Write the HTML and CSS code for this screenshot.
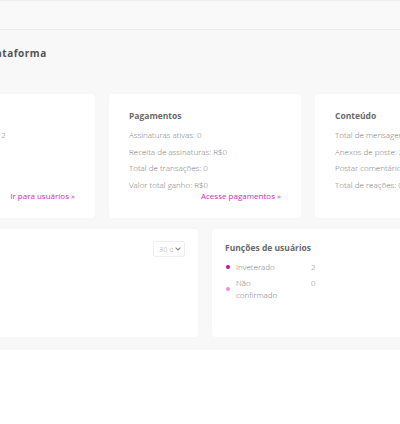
FILE: index.html
```html
<!DOCTYPE html>
<html lang="pt">
<head>
<meta charset="utf-8">
<link rel="stylesheet" href="styles.css">
</head>
<body>
<div class="topbar"></div>
<main class="main">
  <div class="container">
    <h1 class="page-title">Estatísticas da plataforma</h1>
    <div class="stats-row">
      <section class="card stat-card">
        <h2 class="card-title">Usuários</h2>
        <p class="line">Usuários registrados: 2</p>
        <div class="spacer"></div>
        <a class="card-link">Ir para usuários »</a>
      </section>
      <section class="card stat-card">
        <h2 class="card-title">Pagamentos</h2>
        <p class="line">Assinaturas ativas: 0</p>
        <p class="line">Receita de assinaturas: R$0</p>
        <p class="line">Total de transações: 0</p>
        <p class="line">Valor total ganho: R$0</p>
        <div class="spacer"></div>
        <a class="card-link">Acesse pagamentos »</a>
      </section>
      <section class="card stat-card">
        <h2 class="card-title">Conteúdo</h2>
        <p class="line">Total de mensagens: 0</p>
        <p class="line">Anexos de poste: 2</p>
        <p class="line">Postar comentários: 0</p>
        <p class="line">Total de reações: 0</p>
        <div class="spacer"></div>
        <a class="card-link">Ver conteúdo »</a>
      </section>
    </div>
    <div class="charts-row">
      <section class="card chart-card">
        <div class="chart-head">
          <h2 class="card-title">Novos usuários</h2>
          <div class="select"><span class="select-text">30 dias</span>
            <svg class="chev" width="6" height="4" viewBox="0 0 6 4"><path d="M0.6 0.6 L3 3 L5.4 0.6" fill="none" stroke="#8a8a8a" stroke-width="1.1"/></svg>
          </div>
        </div>
      </section>
      <section class="card roles-card">
        <h2 class="card-title roles-title">Funções de usuários</h2>
        <div class="legend">
          <span class="dot dot-a"></span><span class="lg-label">Inveterado</span><span class="lg-val">2</span>
          <span class="dot dot-b"></span><span class="lg-label">Não confirmado</span><span class="lg-val">0</span>
        </div>
      </section>
    </div>
  </div>
</main>
</body>
</html>
```
FILE: styles.css
```css
html, body {
  margin: 0;
  padding: 0;
  background: #ffffff;
  font-family: "Open Sans", "Liberation Sans", sans-serif;
  overflow: hidden;
}
.topbar {
  height: 28px;
  background: #f9f9f9;
  border-top: 1px solid #eeeeee;
  border-bottom: 1px solid #ececec;
}
.main {
  background: #f8f8f8;
  height: 320px;
  overflow: hidden;
}
.container {
  width: 604px;
  margin-left: -97px;
}
.page-title {
  margin: 0;
  padding-top: 17px;
  height: 64px;
  box-sizing: border-box;
  font-size: 10px;
  line-height: 12px;
  font-weight: 700;
  color: #555;
  letter-spacing: 0.5px;
}
.stats-row {
  display: grid;
  grid-template-columns: repeat(3, 192px);
  gap: 14px;
}
.card {
  background: #ffffff;
  border-radius: 3px;
  box-shadow: 0 0 1px rgba(0,0,0,0.06);
  box-sizing: border-box;
}
.stat-card {
  height: 124px;
  padding: 16px 20px 16px 20px;
  display: flex;
  flex-direction: column;
}
.card-title {
  margin: 0 0 5px 0;
  font-size: 8.5px;
  line-height: 12px;
  font-weight: 700;
  color: #6a6a6a;
}
.line {
  margin: 0;
  font-size: 8px;
  line-height: 16.6px;
  font-weight: 300;
  color: #777;
  white-space: nowrap;
}
.spacer { flex: 1; }
.card-link {
  align-self: flex-end;
  font-size: 8px;
  line-height: 12px;
  color: #d02cb8;
  margin-top: -4px;
}
.charts-row {
  display: grid;
  grid-template-columns: 295px 295px;
  gap: 14px;
  margin-top: 11px;
}
.chart-card, .roles-card {
  height: 108px;
  padding: 12px 13px;
}
.chart-head {
  display: flex;
  justify-content: space-between;
  align-items: flex-start;
}
.select {
  width: 32px;
  height: 16px;
  box-sizing: border-box;
  border: 1px solid #efefef;
  border-radius: 2px;
  display: flex;
  align-items: center;
  padding: 0 3px 0 5px;
  gap: 1px;
}
.select-text {
  width: 18px;
  overflow: hidden;
  white-space: nowrap;
  font-size: 7.5px;
  color: #aaa;
  font-weight: 300;
}
.chev { flex: none; margin-left: 1px; }
.roles-title {
  margin-top: 1px;
  margin-bottom: 7px;
}
.legend {
  display: grid;
  grid-template-columns: 11px 50px auto;
  column-gap: 0;
  align-items: center;
  row-gap: 4px;
  font-size: 8px;
  font-weight: 300;
  color: #777;
  line-height: 12px;
}
.lg-label { align-self: start; }
.lg-val { align-self: start; padding-left: 25px; }
.dot {
  width: 4px;
  height: 4px;
  border-radius: 50%;
  margin-left: 1px;
}
.dot-a { background: #c0129f; }
.dot-b { background: #ea8fd9; }
```
